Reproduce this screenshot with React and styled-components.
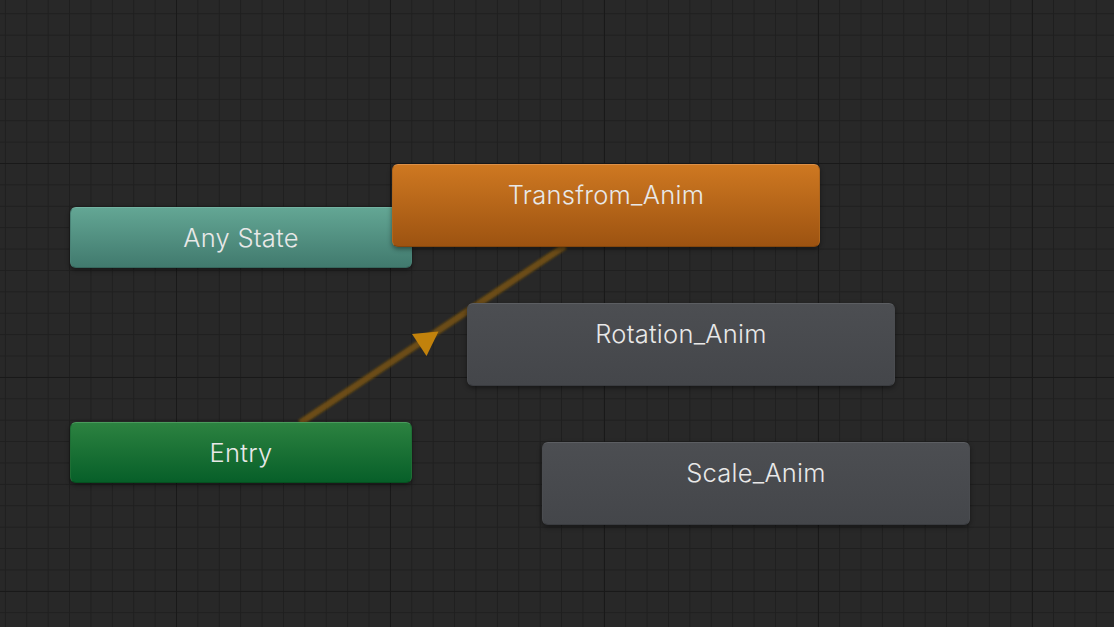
import React from 'react';
import styled, { createGlobalStyle, css } from 'styled-components';

const GlobalStyle = createGlobalStyle`
  html, body {
    margin: 0;
    padding: 0;
    background: #282828;
  }
  body {
    font-family: Inter, "Noto Sans", sans-serif;
  }
`;

const palette = {
  minor: '#1f1f1f',
  major: '#191919',
  text: '#e8e8e8',
  edge: 'rgba(135, 90, 10, 0.72)',
  arrow: '#c2820c',
};

const variants = {
  any: css`
    background: linear-gradient(to bottom, #63a694, #417a6e);
    border-color: #74b3a2 #4a8377 #36665c;
  `,
  entry: css`
    background: linear-gradient(to bottom, #2c8240, #075f29);
    border-color: #4a9a5c #1e6f35 #05501f;
  `,
  active: css`
    background: linear-gradient(to bottom, #ce7821, #9d5311);
    border-color: #dc9048 #b0661c #83460d;
  `,
  state: css`
    background: linear-gradient(to bottom, #4c4e52, #44464a);
    border-color: #5c5e62 #4a4c50 #3a3c40;
  `,
};

const Canvas = styled.div`
  position: relative;
  width: 1114px;
  height: 627px;
  overflow: hidden;
  background-color: #282828;
  background-image:
    linear-gradient(to right, ${palette.major} 1px, transparent 1px),
    linear-gradient(to bottom, ${palette.major} 1px, transparent 1px),
    linear-gradient(to right, ${palette.minor} 1px, transparent 1px),
    linear-gradient(to bottom, ${palette.minor} 1px, transparent 1px);
  background-size: 214px 214px, 214px 214px, 21.4px 21.4px, 21.4px 21.4px;
  background-position: 176px 163px;
`;

const Edges = styled.svg`
  position: absolute;
  inset: 0;
  width: 100%;
  height: 100%;
  pointer-events: none;
`;

const Node = styled.div`
  position: absolute;
  box-sizing: border-box;
  border: 1px solid;
  border-radius: 6px;
  box-shadow: 0 2px 5px rgba(0, 0, 0, 0.45);
  color: ${palette.text};
  font-size: 25.5px;
  font-weight: 350;
  line-height: 60px;
  text-align: center;
  letter-spacing: 0.25px;
  ${(p) => variants[p.$variant]}
`;

const nodes = [
  { id: 'any', label: 'Any State', variant: 'any', x: 70, y: 207, w: 342, h: 61 },
  { id: 'entry', label: 'Entry', variant: 'entry', x: 70, y: 422, w: 342, h: 61 },
  { id: 'rot', label: 'Rotation_Anim', variant: 'state', x: 467, y: 303, w: 428, h: 83 },
  { id: 'scale', label: 'Scale_Anim', variant: 'state', x: 542, y: 442, w: 428, h: 83 },
  { id: 'trans', label: 'Transfrom_Anim', variant: 'active', x: 392, y: 164, w: 428, h: 83 },
];

export default function App() {
  return (
    <>
      <GlobalStyle />
      <Canvas>
        <Edges viewBox="0 0 1114 627">
          <defs>
            <filter id="soft" x="-10%" y="-10%" width="120%" height="120%">
              <feGaussianBlur stdDeviation="0.8" />
            </filter>
          </defs>
          <line
            x1="300"
            y1="423"
            x2="565"
            y2="246"
            stroke={palette.edge}
            strokeWidth="6.5"
            filter="url(#soft)"
          />
        </Edges>
        {nodes.map((n) => (
          <Node
            key={n.id}
            $variant={n.variant}
            style={{ left: n.x, top: n.y, width: n.w, height: n.h }}
          >
            {n.label}
          </Node>
        ))}
        <Edges viewBox="0 0 1114 627">
          <polygon points="412,334 438.5,331.5 426.5,356" fill={palette.arrow} />
        </Edges>
      </Canvas>
    </>
  );
}
